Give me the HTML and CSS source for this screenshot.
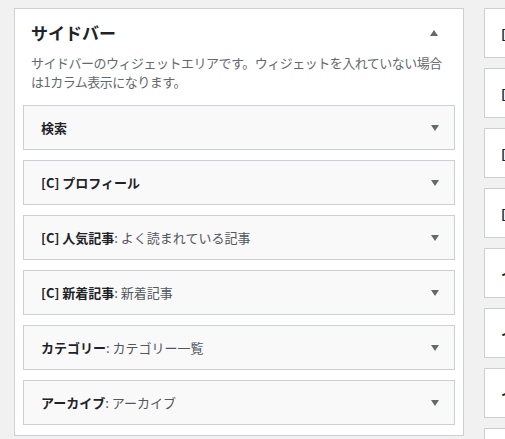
FILE: index.html
```html
<!DOCTYPE html>
<html lang="ja">
<head>
<meta charset="utf-8">
<link rel="stylesheet" href="styles.css">
</head>
<body>
<div class="page">
  <section class="panel">
    <div class="panel-head">
      <h2 class="panel-title">サイドバー</h2>
      <span class="arrow-up"></span>
    </div>
    <p class="panel-desc">サイドバーのウィジェットエリアです。ウィジェットを入れていない場合は1カラム表示になります。</p>
    <ul class="widgets">
      <li class="widget"><span class="w-title"><b>検索</b></span><span class="arrow-down"></span></li>
      <li class="widget"><span class="w-title"><b>[C] プロフィール</b></span><span class="arrow-down"></span></li>
      <li class="widget"><span class="w-title"><b>[C] 人気記事</b><span class="w-sub">: よく読まれている記事</span></span><span class="arrow-down"></span></li>
      <li class="widget"><span class="w-title"><b>[C] 新着記事</b><span class="w-sub">: 新着記事</span></span><span class="arrow-down"></span></li>
      <li class="widget"><span class="w-title"><b>カテゴリー</b><span class="w-sub">: カテゴリー一覧</span></span><span class="arrow-down"></span></li>
      <li class="widget"><span class="w-title"><b>アーカイブ</b><span class="w-sub">: アーカイブ</span></span><span class="arrow-down"></span></li>
    </ul>
  </section>
  <aside class="side">
    <div class="side-box">[C] 固定</div>
    <div class="side-box">[C] 固定</div>
    <div class="side-box">[C] 固定</div>
    <div class="side-box">[C] 固定</div>
    <div class="side-box">イ</div>
    <div class="side-box">イ</div>
    <div class="side-box">イ</div>
    <div class="side-box">イ</div>
  </aside>
</div>
</body>
</html>
```
FILE: styles.css
```css
html, body {
  margin: 0;
  padding: 0;
  background: #f1f1f1;
  overflow: hidden;
}
body {
  font-family: "Noto Sans CJK JP", "Noto Sans", sans-serif;
  color: #1d2327;
}
.page {
  display: flex;
  align-items: flex-start;
  padding: 8px 0 0 14px;
  gap: 20px;
  width: 700px;
}
.panel {
  box-sizing: border-box;
  width: 450px;
  height: 428px;
  flex: none;
  background: #fff;
  border: 1px solid #ccd0d4;
  padding: 0 8px 10px;
}
.panel-head {
  display: flex;
  align-items: center;
  justify-content: space-between;
  padding: 12px 17px 0 8px;
  height: 24px;
}
.panel-title {
  margin: 0;
  font-size: 17px;
  line-height: 24px;
  font-weight: 700;
}
.arrow-up {
  width: 0;
  height: 0;
  border-left: 4px solid transparent;
  border-right: 4px solid transparent;
  border-bottom: 6px solid #646970;
}
.panel-desc {
  margin: 8px 0 0;
  padding: 0 8px 0 8px;
  font-size: 13px;
  letter-spacing: -0.5px;
  line-height: 19px;
  color: #646970;
}
.widgets {
  list-style: none;
  margin: 14px 0 0;
  padding: 0;
  display: flex;
  flex-direction: column;
  gap: 10px;
}
.widget {
  box-sizing: border-box;
  height: 45px;
  display: flex;
  align-items: center;
  justify-content: space-between;
  padding: 0 15px 0 17px;
  background: #f9f9f9;
  border: 1px solid #ccd0d4;
  font-size: 13px;
}
.w-title b {
  font-weight: 700;
  color: #1d2327;
}
.w-sub {
  color: #50575e;
}
.arrow-down {
  width: 0;
  height: 0;
  border-left: 4.5px solid transparent;
  border-right: 4.5px solid transparent;
  border-top: 6px solid #646970;
}
.side {
  display: flex;
  flex-direction: column;
  gap: 10px;
  width: 200px;
  flex: none;
}
.side-box {
  box-sizing: border-box;
  height: 50px;
  background: #fff;
  border: 1px solid #ccd0d4;
  padding-left: 16px;
  display: flex;
  align-items: center;
  font-size: 13px;
  font-weight: 700;
  white-space: nowrap;
}
```
